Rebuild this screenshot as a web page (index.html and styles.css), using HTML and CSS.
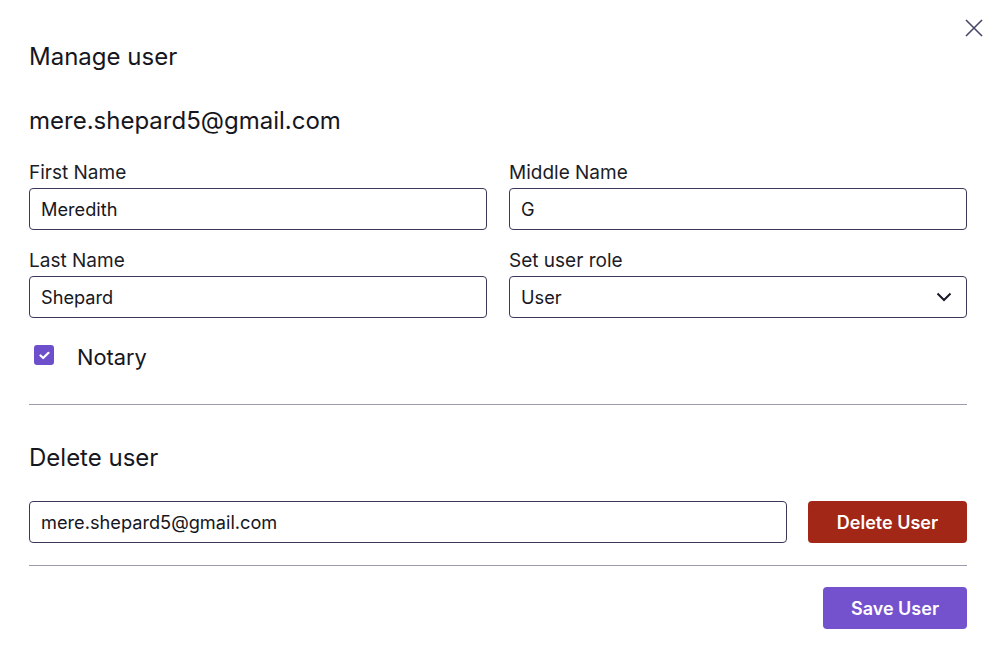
FILE: index.html
```html
<!DOCTYPE html>
<html>
<head>
<meta charset="utf-8">
<link rel="stylesheet" href="styles.css">
</head>
<body>
<div class="modal">
  <button class="close" aria-label="Close">
    <svg width="20" height="20" viewBox="0 0 20 20"><path d="M2 2L18 18M18 2L2 18" stroke="#46466a" stroke-width="1.6" fill="none"/></svg>
  </button>
  <h1 class="title">Manage user</h1>
  <div class="email">mere.shepard5@gmail.com</div>
  <div class="grid">
    <div class="field">
      <label class="label">First Name</label>
      <div class="input">Meredith</div>
    </div>
    <div class="field">
      <label class="label">Middle Name</label>
      <div class="input">G</div>
    </div>
    <div class="field">
      <label class="label">Last Name</label>
      <div class="input">Shepard</div>
    </div>
    <div class="field">
      <label class="label">Set user role</label>
      <div class="input select">User
        <svg width="16" height="10" viewBox="0 0 16 10"><path d="M1.5 1.5L8 8L14.5 1.5" stroke="#1a1a2a" stroke-width="2" fill="none"/></svg>
      </div>
    </div>
  </div>
  <div class="check-row">
    <span class="checkbox">
      <svg width="11" height="9" viewBox="0 0 11 9"><path d="M1.5 4.5L4.2 7L9.5 1.8" stroke="#fff" stroke-width="2.2" fill="none" stroke-linecap="round" stroke-linejoin="round"/></svg>
    </span>
    <span class="check-label">Notary</span>
  </div>
  <hr class="divider first">
  <h2 class="title delete-title">Delete user</h2>
  <div class="delete-row">
    <div class="input grow">mere.shepard5@gmail.com</div>
    <button class="btn danger">Delete User</button>
  </div>
  <hr class="divider second">
  <div class="footer">
    <button class="btn primary">Save User</button>
  </div>
</div>
</body>
</html>
```
FILE: styles.css
```css
* { box-sizing: border-box; }
html, body { margin: 0; background: #fff; }
body {
  font-family: "Inter", "Liberation Sans", Arial, sans-serif;
  color: #1a1a24;
}
.modal {
  position: relative;
  width: 1000px;
  height: 664px;
  padding: 43px 33px 0 29px;
}
.close {
  position: absolute;
  top: 18px;
  right: 16px;
  border: 0;
  background: none;
  padding: 0;
  width: 20px;
  height: 20px;
}
.title {
  margin: 0;
  font-size: 24px;
  font-weight: 400;
  line-height: 28px;
  color: #16161e;
}
.email {
  margin-top: 36px;
  font-size: 24px;
  line-height: 28px;
  color: #16161e;
}
.grid {
  margin-top: 25px;
  display: grid;
  grid-template-columns: 1fr 1fr;
  column-gap: 22px;
  row-gap: 18px;
}
.field { display: flex; flex-direction: column; }
.label {
  font-size: 19px;
  line-height: 24px;
  margin-bottom: 4px;
  position: relative;
  top: 1px;
  color: #1c1c26;
}
.input {
  height: 42px;
  border: 1px solid #3a3a58;
  border-radius: 4px;
  padding: 0 11px;
  display: flex;
  align-items: center;
  font-size: 18.2px;
  color: #16161e;
}
.select { justify-content: space-between; padding-right: 14px; }
.check-row {
  display: flex;
  align-items: center;
  margin-top: 27px;
  padding-left: 5px;
  height: 20px;
}
.checkbox {
  width: 20px;
  height: 20px;
  border-radius: 3px;
  background: #6e4fcb;
  display: flex;
  align-items: center;
  justify-content: center;
}
.check-label {
  margin-left: 23px;
  font-size: 21.8px;
  line-height: 24px;
  position: relative;
  top: 2px;
  color: #16161e;
}
.divider {
  border: 0;
  border-top: 1px solid #9a9cad;
  margin: 0;
}
.divider.first { margin-top: 39px; }
.delete-title { margin-top: 39px; }
.delete-row {
  display: flex;
  gap: 21px;
  margin-top: 29px;
}
.grow { flex: 1; }
.btn {
  border: 0;
  border-radius: 4px;
  color: #fff;
  font-family: inherit;
  font-size: 18px;
  font-weight: 600;
  height: 42px;
  padding: 0;
}
.danger { background: #a22717; width: 159px; }
.primary { background: #7452ce; width: 144px; }
.divider.second { margin-top: 22px; }
.footer {
  display: flex;
  justify-content: flex-end;
  margin-top: 21px;
}
```
